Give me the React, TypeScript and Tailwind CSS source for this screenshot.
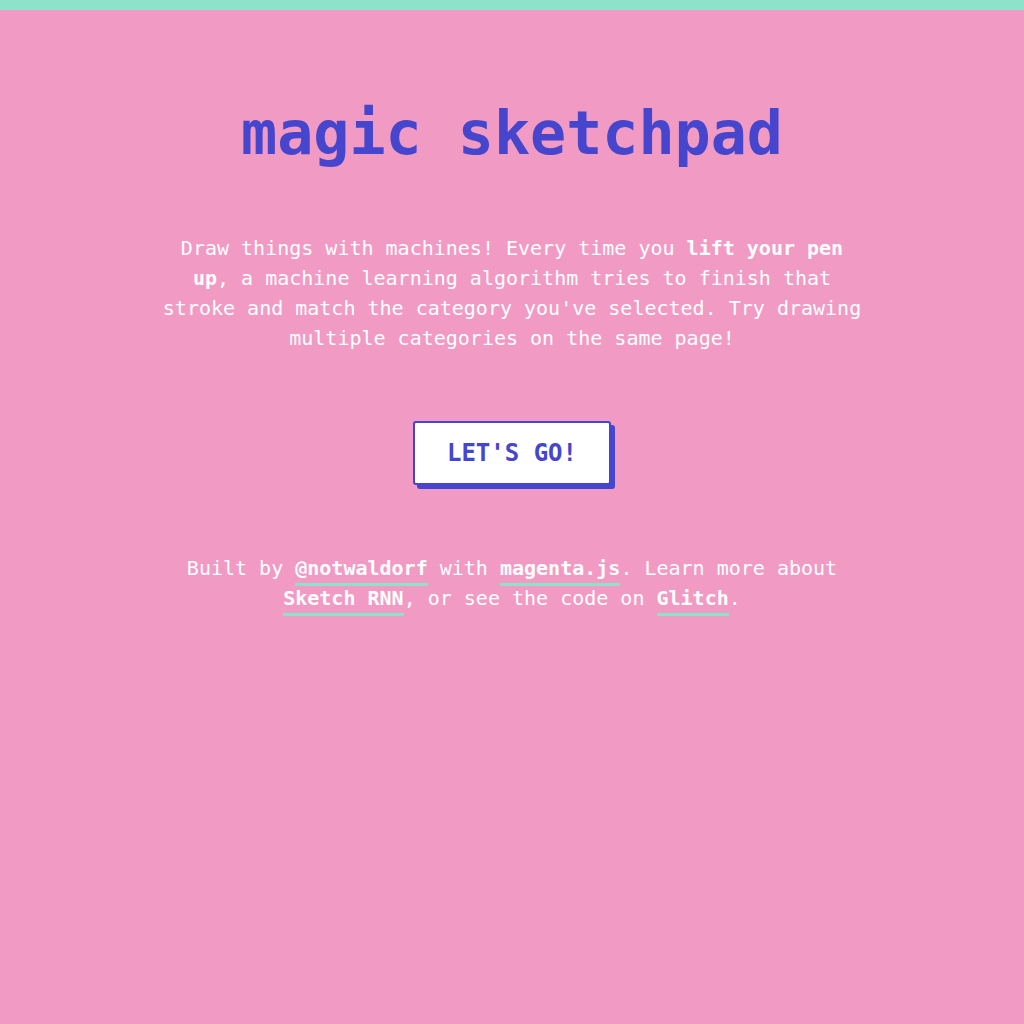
const App = () => {
  return (
    <div
      className="min-h-screen bg-[#f19bc4] text-white"
      style={{ fontFamily: '"DejaVu Sans Mono", "Liberation Mono", monospace' }}
    >
      {/* Top strip */}
      <div className="h-[10px] bg-[#8de2c9]" />

      <main className="flex flex-col items-center">
        <h1 className="mt-[87px] text-[60px] leading-[72px] font-bold text-[#4545cd]">
          magic sketchpad
        </h1>

        <p className="mt-[64px] w-[700px] text-center text-[20px] leading-[30px]">
          Draw things with machines! Every time you <b>lift your pen up</b>, a
          machine learning algorithm tries to finish that stroke and match the
          category you've selected. Try drawing multiple categories on the same
          page!
        </p>

        <button className="mt-[68px] rounded-[3px] border-2 border-[#4545cd] bg-white px-[32px] py-[15px] text-[24px] leading-[30px] font-bold text-[#4545cd] shadow-[4px_4px_0_0_#4545cd]">
          LET'S GO!
        </button>

        <p className="mt-[68px] w-[700px] text-center text-[20px] leading-[30px]">
          Built by{" "}
          <a className="border-b-[3px] border-[#8de2c9] pb-[3px] font-bold">@notwaldorf</a>{" "}
          with{" "}
          <a className="border-b-[3px] border-[#8de2c9] pb-[3px] font-bold">magenta.js</a>.
          Learn more about{" "}
          <a className="border-b-[3px] border-[#8de2c9] pb-[3px] font-bold">Sketch RNN</a>,
          or see the code on{" "}
          <a className="border-b-[3px] border-[#8de2c9] pb-[3px] font-bold">Glitch</a>.
        </p>
      </main>
    </div>
  );
};

export default App;
